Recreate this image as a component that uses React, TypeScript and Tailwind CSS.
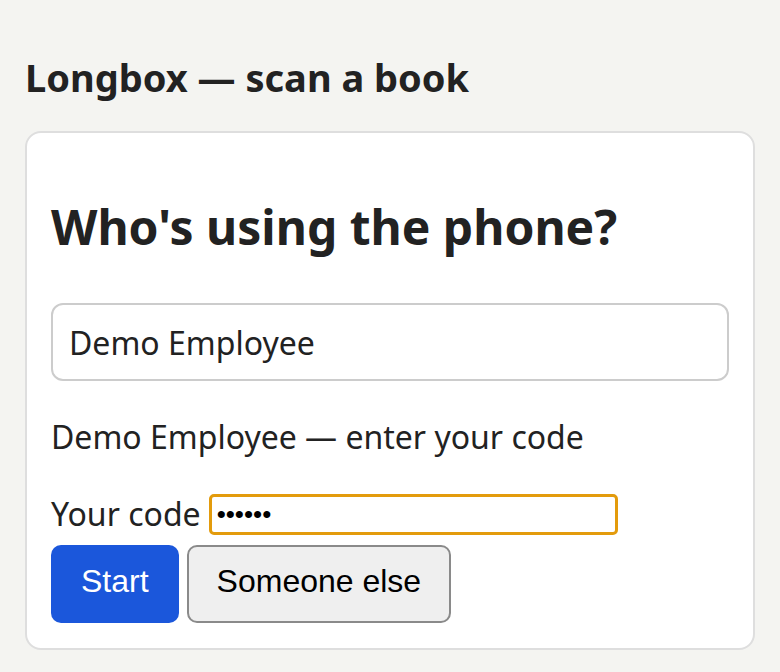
import React from 'react';

const App: React.FC = () => {
  return (
    <div className="min-h-[672px] bg-[#f4f4f1] px-[25px] pt-[50px] text-[#222] font-['Noto_Sans',sans-serif]">
      <h1 className="text-[38px] font-bold leading-[54px] mb-[27px]">Longbox — scan a book</h1>
      <div className="bg-white border-2 border-[#dedede] rounded-[16px] px-[24px] pt-[62px] pb-[25px]">
        <h2 className="text-[48px] font-bold leading-[64px] mb-[44px]">Who's using the phone?</h2>
        <input
          type="text"
          defaultValue="Demo Employee"
          className="w-full h-[78px] border-2 border-[#cccccc] rounded-[12px] px-[16px] text-[32px] text-[#222] bg-white outline-none"
        />
        <p className="text-[32px] leading-[44px] mt-[34px]">Demo Employee — enter your code</p>
        <div className="flex items-center gap-[8px] mt-[34px]">
          <label className="text-[32px] leading-[42px]">Your code</label>
          <input
            type="password"
            defaultValue="123456"
            className="w-[409px] h-[41px] border-[3px] border-[#e39b0c] rounded-[5px] px-[5px] text-[26px] font-['Liberation_Sans',sans-serif] text-black bg-white outline-none"
          />
        </div>
        <div className="flex gap-[8px] mt-[10px]">
          <button className="h-[78px] px-[30px] pb-[6px] rounded-[10px] bg-[#1b57db] text-white text-[32px] font-['Liberation_Sans',sans-serif]">
            Start
          </button>
          <button className="h-[78px] px-[28px] pb-[6px] rounded-[10px] bg-[#efefef] border-2 border-[#8a8a8a] text-black text-[32px] font-['Liberation_Sans',sans-serif]">
            Someone else
          </button>
        </div>
      </div>
    </div>
  );
};

export default App;
